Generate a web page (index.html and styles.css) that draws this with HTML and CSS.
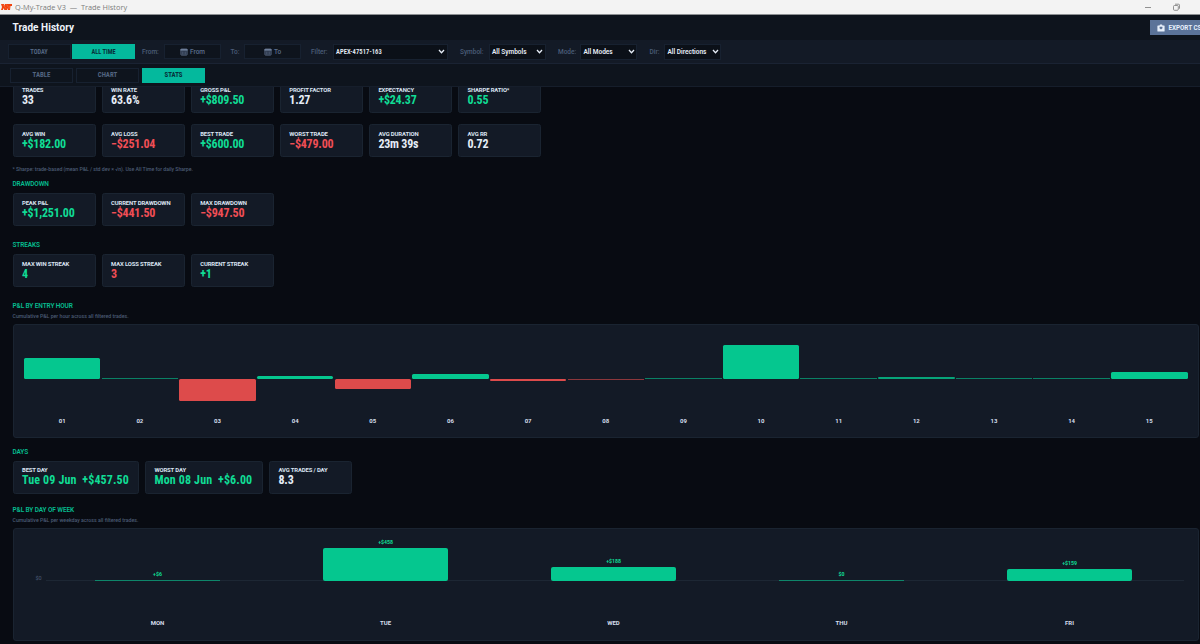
FILE: index.html
```html
<!DOCTYPE html>
<html lang="en">
<head>
<meta charset="utf-8">
<title>Trade History</title>
<link rel="stylesheet" href="styles.css">
</head>
<body>
<div class="titlebar">
  <svg class="logo" viewBox="0 0 11 8"><path d="M0 1h3l1 2V1h7v2H9.500l-.5 4H7L6 5v2H3.500L2 5v2H0l1-3z" fill="#f1440f"/><path d="M2 1.500l3 4M5.500 1.500l2 3M8.500 3L8 6" stroke="#f98a64" stroke-width=".4"/></svg>
  <span class="wintitle">Q-My-Trade V3 &nbsp;—&nbsp; Trade History</span>
  <svg class="winbtns" viewBox="0 0 36 10"><path d="M0 5.500h6" stroke="#777" stroke-width=".8"/><rect x="28.500" y="3.500" width="4.800" height="4.800" rx="1" fill="none" stroke="#777" stroke-width=".8"/><path d="M30 2.200h3.500a1 1 0 0 1 1 1v3.500" fill="none" stroke="#777" stroke-width=".8"/></svg>
</div>
<header class="header">
  <h1>Trade History</h1>
  <button class="export"><svg viewBox="0 0 8 8"><path d="M1 1.500h1.500L3 .5h2l.5 1H7a.6.6 0 0 1 .6.600v4.800a.6.6 0 0 1-.6.600H1a.6.6 0 0 1-.6-.6V2.100A.6.6 0 0 1 1 1.500z" fill="#e6effb"/><path d="M2.700 2.700h2.600v1H6L4 5.600 2 3.700h.7z" fill="#5b7399"/></svg>EXPORT CSV</button>
</header>
<div class="filters">
  <button class="btn">TODAY</button>
  <button class="btn on">ALL TIME</button>
  <label class="l-from">From:</label>
  <div class="date"><svg viewBox="0 0 8 8"><rect x=".8" y=".9" width="6.400" height="6.300" rx=".8" fill="#2b374b" stroke="#5c6b85" stroke-width=".7"/><path d="M.5 1.800h7" stroke="#6d7d98" stroke-width="1.700"/><path d="M2 4.200h4M2 5.800h4" stroke="#5c6b85" stroke-width=".7" stroke-dasharray="1 .5"/></svg>From</div>
  <label class="l-to">To:</label>
  <div class="date"><svg viewBox="0 0 8 8"><rect x=".8" y=".9" width="6.400" height="6.300" rx=".8" fill="#2b374b" stroke="#5c6b85" stroke-width=".7"/><path d="M.5 1.800h7" stroke="#6d7d98" stroke-width="1.700"/><path d="M2 4.200h4M2 5.800h4" stroke="#5c6b85" stroke-width=".7" stroke-dasharray="1 .5"/></svg>To</div>
  <label class="l-filter">Filter:</label>
  <div class="select s-filter"><span class="acct">APEX-47517-163</span><svg viewBox="0 0 7 5"><path d="M1 1l2.500 2.700L6 1"/></svg></div>
  <label class="l-symbol">Symbol:</label>
  <div class="select s-symbol"><span>All Symbols</span><svg viewBox="0 0 7 5"><path d="M1 1l2.500 2.700L6 1"/></svg></div>
  <label class="l-mode">Mode:</label>
  <div class="select s-mode"><span>All Modes</span><svg viewBox="0 0 7 5"><path d="M1 1l2.500 2.700L6 1"/></svg></div>
  <label class="l-dir">Dir:</label>
  <div class="select s-dir"><span>All Directions</span><svg viewBox="0 0 7 5"><path d="M1 1l2.500 2.700L6 1"/></svg></div>
</div>
<nav class="tabs">
  <button class="btn">TABLE</button>
  <button class="btn">CHART</button>
  <button class="btn on">STATS</button>
</nav>
<main class="view"><div class="content">
  <div class="cards">
    <div class="card"><b>TRADES</b><strong>33</strong></div>
    <div class="card"><b>WIN RATE</b><strong>63.6%</strong></div>
    <div class="card"><b>GROSS P&amp;L</b><strong class="pos">+$809.50</strong></div>
    <div class="card"><b>PROFIT FACTOR</b><strong>1.27</strong></div>
    <div class="card"><b>EXPECTANCY</b><strong class="pos">+$24.37</strong></div>
    <div class="card"><b>SHARPE RATIO*</b><strong class="pos">0.55</strong></div>
  </div>
  <div class="cards second">
    <div class="card"><b>AVG WIN</b><strong class="pos">+$182.00</strong></div>
    <div class="card"><b>AVG LOSS</b><strong class="neg">−$251.04</strong></div>
    <div class="card"><b>BEST TRADE</b><strong class="pos">+$600.00</strong></div>
    <div class="card"><b>WORST TRADE</b><strong class="neg">−$479.00</strong></div>
    <div class="card"><b>AVG DURATION</b><strong>23m 39s</strong></div>
    <div class="card"><b>AVG RR</b><strong>0.72</strong></div>
  </div>
  <p class="note foot">* Sharpe: trade-based (mean P&amp;L / std dev × √n). Use All Time for daily Sharpe.</p>
  <h2>DRAWDOWN</h2>
  <div class="cards">
    <div class="card"><b>PEAK P&amp;L</b><strong class="pos">+$1,251.00</strong></div>
    <div class="card"><b>CURRENT DRAWDOWN</b><strong class="neg">−$441.50</strong></div>
    <div class="card"><b>MAX DRAWDOWN</b><strong class="neg">−$947.50</strong></div>
  </div>
  <h2 class="gap">STREAKS</h2>
  <div class="cards">
    <div class="card"><b>MAX WIN STREAK</b><strong class="pos">4</strong></div>
    <div class="card"><b>MAX LOSS STREAK</b><strong class="neg">3</strong></div>
    <div class="card"><b>CURRENT STREAK</b><strong class="pos">+1</strong></div>
  </div>
  <h2 class="gap charthead">P&amp;L BY ENTRY HOUR</h2>
  <p class="note">Cumulative P&amp;L per hour across all filtered trades.</p>
  <div class="chart hours">
    <div class="col"><div class="up"><i style="height:20.5px"></i></div><div class="down"></div><span>01</span></div>
    <div class="col"><div class="up"><i class="thin"></i></div><div class="down"></div><span>02</span></div>
    <div class="col"><div class="up"></div><div class="down"><i style="height:22px"></i></div><span>03</span></div>
    <div class="col"><div class="up"><i style="height:3px"></i></div><div class="down"></div><span>04</span></div>
    <div class="col"><div class="up"></div><div class="down"><i style="height:10px"></i></div><span>05</span></div>
    <div class="col"><div class="up"><i style="height:5px"></i></div><div class="down"></div><span>06</span></div>
    <div class="col"><div class="up"></div><div class="down"><i style="height:2px"></i></div><span>07</span></div>
    <div class="col"><div class="up"></div><div class="down"><i class="thin"></i></div><span>08</span></div>
    <div class="col"><div class="up"><i class="thin"></i></div><div class="down"></div><span>09</span></div>
    <div class="col"><div class="up"><i style="height:34px"></i></div><div class="down"></div><span>10</span></div>
    <div class="col"><div class="up"><i class="thin"></i></div><div class="down"></div><span>11</span></div>
    <div class="col"><div class="up"><i class="low" style="height:2px"></i></div><div class="down"></div><span>12</span></div>
    <div class="col"><div class="up"><i class="thin"></i></div><div class="down"></div><span>13</span></div>
    <div class="col"><div class="up"><i class="thin"></i></div><div class="down"></div><span>14</span></div>
    <div class="col"><div class="up"><i style="height:7px"></i></div><div class="down"></div><span>15</span></div>
  </div>
  <h2 class="days">DAYS</h2>
  <div class="cards">
    <div class="card wide1"><b>BEST DAY</b><strong class="pos day">Tue 09 Jun &nbsp;+$457.50</strong></div>
    <div class="card wide2"><b>WORST DAY</b><strong class="pos day">Mon 08 Jun &nbsp;+$6.00</strong></div>
    <div class="card"><b>AVG TRADES / DAY</b><strong>8.3</strong></div>
  </div>
  <h2 class="charthead week">P&amp;L BY DAY OF WEEK</h2>
  <p class="note">Cumulative P&amp;L per weekday across all filtered trades.</p>
  <div class="chart weekdays">
    <em class="zero">$0</em>
    <div class="col"><div class="up"><small>+$6</small><i class="thin"></i></div><span>MON</span></div>
    <div class="col"><div class="up"><small>+$458</small><i style="height:33px"></i></div><span>TUE</span></div>
    <div class="col"><div class="up"><small>+$188</small><i style="height:13.5px"></i></div><span>WED</span></div>
    <div class="col"><div class="up"><small>$0</small><i class="thin"></i></div><span>THU</span></div>
    <div class="col"><div class="up"><small>+$159</small><i style="height:11.5px"></i></div><span>FRI</span></div>
  </div>
</div></main>
</body>
</html>
```
FILE: styles.css
```css
* { box-sizing: border-box; }
body {
  margin: 0; width: 1200px; height: 644px; overflow: hidden;
  display: flex; flex-direction: column;
  background: #080b12; color: #e6edf7;
  font-family: Roboto, "Liberation Sans", sans-serif;
}
h1, h2, p { margin: 0; }
button { font: inherit; border: 0; padding: 0; }
i, em { font-style: normal; }

.titlebar { height: 15px; flex: none; display: flex; align-items: center; background: #f3f3f3; border-bottom: 1px solid #8c8f92; }
.logo { width: 11px; height: 8px; margin-left: 1px; }
.wintitle { margin-left: 3px; font: 7.350px "Open Sans", sans-serif; color: #7c7c7c; white-space: nowrap; }
.winbtns { width: 36px; height: 10px; margin-left: auto; margin-right: 19px; }

.header { height: 25px; flex: none; display: flex; align-items: center; padding-left: 12.500px; background: #0e141d; }
h1 { font-size: 10px; font-weight: 700; line-height: 12px; letter-spacing: .06px; color: #eef3fa; white-space: nowrap; }
.export { width: 84px; height: 15px; margin: 0 -34px 0 auto; padding-left: 7px; display: flex; align-items: center; gap: 3.500px; flex: none;
  background: #5b7399; color: #e6effb; font-size: 6.300px; font-weight: 700; font-stretch: 90%; letter-spacing: -.03px; white-space: nowrap; }
.export svg { width: 8px; height: 8px; }

.filters { height: 24px; flex: none; display: flex; align-items: center; padding: 0 0 0 7.500px; background: #131a26; border-bottom: 1px solid #1a2333; }
.btn { width: 63px; height: 15px; flex: none; background: #0e141d; border: 1px solid #172130; color: #526480; font-size: 6.300px; font-weight: 700; font-stretch: 86%; line-height: 13px; text-align: center; }
.btn.on { background: #04b99d; border-color: #04b99d; color: #07303a; }
.filters .btn { line-height: 14px; }
.filters .btn + .btn { margin-left: 1.500px; }
label { font-size: 6.500px; font-weight: 500; color: #4b5d78; flex: none; white-space: nowrap; }
.l-from { width: 22px; margin-left: 7px; }
.l-to { width: 13.500px; margin-left: 9.500px; }
.l-filter { width: 21.500px; margin-left: 10px; }
.l-symbol { width: 28.500px; margin-left: 12.500px; }
.l-mode { width: 22px; margin-left: 12.500px; }
.l-dir { width: 14.500px; margin-left: 12.500px; }
.date { width: 57px; height: 15px; flex: none; display: flex; align-items: center; justify-content: center; gap: 2px; background: #0e141d; border: 1px solid #172130; color: #5c6f8d; font-size: 6.500px; font-weight: 500; }
.date svg { width: 8px; height: 8px; }
.select { height: 16px; flex: none; display: flex; align-items: center; justify-content: space-between; padding: 0 1.500px 0 2.500px; background: #0b1018; border: 1px solid #172130; font-size: 6.500px; font-weight: 600; white-space: nowrap; }
.select svg { width: 7px; height: 5px; fill: none; stroke: #e6edf7; stroke-width: 1.300; }
.acct { font-stretch: 84%; letter-spacing: .1px; }
.s-filter { width: 115px; } .s-symbol { width: 57px; } .s-mode { width: 57px; } .s-dir { width: 57px; }

.tabs { height: 23px; flex: none; display: flex; align-items: center; gap: 3px; padding-left: 10px; background: #0e141d; border-bottom: 1px solid #161e2b; }
.tabs .btn { font-size: 6.800px; }

.view { flex: 1; min-height: 0; overflow: hidden; }
.content { margin-top: -7px; padding-left: 12.500px; }
.cards { display: flex; gap: 6px; }
.card { width: 83.100px; height: 33px; flex: none; display: flex; flex-direction: column; padding: 5.500px 0 0 8.500px; background: #131a26; border: 1px solid #1a2431; border-radius: 2.500px; white-space: nowrap; }
.card b { font-size: 5.900px; line-height: 6px; font-weight: 700; font-stretch: 90%; letter-spacing: -.13px; color: #dbe4f2; }
.card strong { margin-top: 1px; font-size: 12px; line-height: 13px; font-weight: 700; font-stretch: 86%; letter-spacing: -.2px; }
.wide1 { width: 126.500px; } .wide2 { width: 118px; }
.card .day { letter-spacing: .14px; font-stretch: 87%; }
.pos { color: #10dc95; } .neg { color: #f14e55; }
.second { margin-top: 11px; }
h2 { height: 18px; font-size: 6.500px; line-height: 19px; font-weight: 600; font-stretch: 92%; letter-spacing: -.12px; color: #06bb8e; white-space: nowrap; }
.note { height: 10px; font-size: 5.200px; line-height: 10px; font-weight: 500; color: #4b5b74; white-space: nowrap; }
.foot { margin-top: 7px; letter-spacing: -.03px; }
.foot + h2 { margin-top: 1px; }
.gap { margin-top: 10px; }
.charthead { height: 14px; }
.note + .chart { margin-top: 3px; }
.chart { width: 1186px; height: 113.500px; background: #131a26; border: 1px solid #1a2431; border-radius: 3px; display: grid; }
.hours { grid-template-columns: repeat(15, 1fr); column-gap: 1.200px; padding: 0 10px 0 10.500px; }
.col { display: flex; flex-direction: column; align-items: center; }
.up { width: 100%; height: 53.500px; display: flex; flex-direction: column; justify-content: flex-end; align-items: center; }
.down { width: 100%; height: 37.500px; }
.col i { display: block; width: 100%; border-radius: 1.500px; background: #05c78f; }
.down i { background: #dd4b4b; }
.col .thin { height: 1px; opacity: .6; border-radius: 0; }
.col .low { opacity: .8; }
.col span { font-size: 6px; line-height: 10px; font-weight: 700; font-stretch: 90%; color: #d5deec; }
.days { margin-top: 5px; }
.week { margin-top: 7px; }
.weekdays { position: relative; grid-template-columns: repeat(5, 228px); padding-left: 30px; }
.weekdays::before { content: ""; position: absolute; left: 32px; right: 14px; top: 51.500px; height: 1px; background: #1d2734; }
.weekdays .col { position: relative; }
.weekdays .up { height: 52px; }
.weekdays i { width: 125.500px; border-radius: 2px; }
.weekdays span { margin-top: 37.500px; }
small { font-size: 5.200px; line-height: 6px; margin-bottom: 3px; font-weight: 700; font-stretch: 90%; color: #10dc95; }
.zero { position: absolute; left: 22px; top: 46px; font-size: 5.500px; line-height: 7px; color: #4b5b74; }
```
